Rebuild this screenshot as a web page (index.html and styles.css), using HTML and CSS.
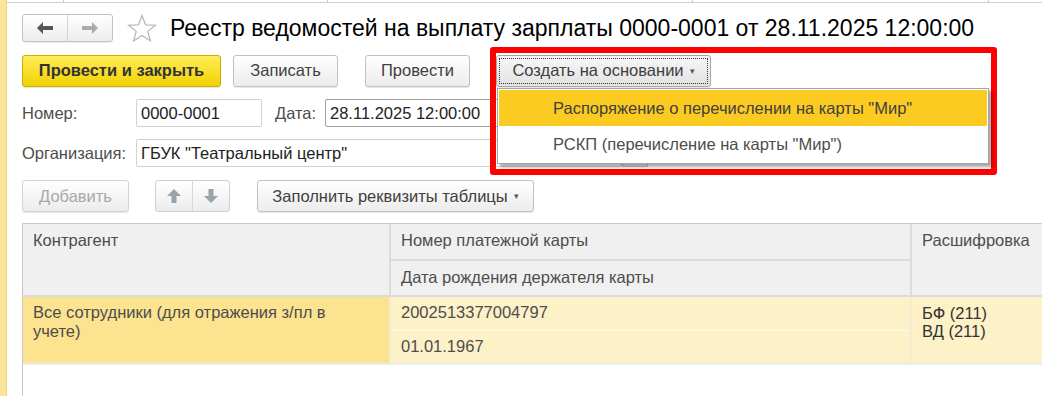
FILE: index.html
```html
<!DOCTYPE html>
<html lang="ru">
<head>
  <meta charset="UTF-8">
  <title>Реестр ведомостей на выплату зарплаты</title>
  <link rel="stylesheet" href="styles.css">
</head>
<body>

<div class="page">
  <div class="side-strip"></div>
  <div class="main">
    <div class="tabs-line"><span class="tick t1"></span><span class="tick t2"></span><span class="tick t3"></span><span class="tick t4"></span></div>

    <div class="title-row">
      <div class="nav-group">
        <div class="nav-btn">
          <svg width="16" height="12" viewBox="0 0 16 12"><path d="M0 6 L6 0 L6 4 L16 4 L16 8 L6 8 L6 12 Z" fill="#555"/></svg>
        </div>
        <div class="nav-btn">
          <svg width="16" height="12" viewBox="0 0 16 12"><path d="M16 6 L10 0 L10 4 L0 4 L0 8 L10 8 L10 12 Z" fill="#aaa"/></svg>
        </div>
      </div>
      <div class="star">
        <svg width="30" height="29" viewBox="0 0 30 29"><path d="M15 1.5 L18.6 10.8 L28.5 11.2 L20.8 17.4 L23.4 27 L15 21.5 L6.6 27 L9.2 17.4 L1.5 11.2 L11.4 10.8 Z" fill="none" stroke="#b4b4b4" stroke-width="1.2"/></svg>
      </div>
      <h1 class="title">Реестр ведомостей на выплату зарплаты 0000-0001 от 28.11.2025 12:00:00</h1>
    </div>

    <div class="command-row">
      <div class="btn btn-primary">Провести и закрыть</div>
      <div class="btn btn-write">Записать</div>
      <div class="btn btn-post">Провести</div>
      <div class="btn btn-create"><span class="focus">Создать на основании <span class="caret">&#9662;</span></span></div>
    </div>

    <div class="field-row">
      <span class="label label-num">Номер:</span>
      <div class="input input-num">0000-0001</div>
      <span class="label label-date">Дата:</span>
      <div class="input input-date">28.11.2025 12:00:00</div>
    </div>

    <div class="field-row">
      <span class="label label-org">Организация:</span>
      <div class="input input-org">ГБУК "Театральный центр"</div>
      <div class="input-btn"></div>
    </div>

    <div class="table-bar">
      <div class="btn btn-add">Добавить</div>
      <div class="move-group">
        <div class="move-btn">
          <svg width="14" height="14" viewBox="0 0 14 14"><path d="M7 0 L14 7 L9.5 7 L9.5 14 L4.5 14 L4.5 7 L0 7 Z" fill="#9aa4a8"/></svg>
        </div>
        <div class="move-btn">
          <svg width="14" height="14" viewBox="0 0 14 14"><path d="M7 14 L14 7 L9.5 7 L9.5 0 L4.5 0 L4.5 7 L0 7 Z" fill="#9aa4a8"/></svg>
        </div>
      </div>
      <div class="btn btn-fill">Заполнить реквизиты таблицы <span class="caret">&#9662;</span></div>
    </div>

    <div class="grid">
      <div class="grid-head">
        <div class="cell col-1 head-tall">Контрагент</div>
        <div class="col-2">
          <div class="cell head-sub">Номер платежной карты</div>
          <div class="cell head-sub">Дата рождения держателя карты</div>
        </div>
        <div class="cell col-3 head-tall">Расшифровка</div>
      </div>
      <div class="grid-row">
        <div class="cell col-1 row-current">Все сотрудники (для отражения з/пл в учете)</div>
        <div class="col-2">
          <div class="cell row-sub">2002513377004797</div>
          <div class="cell row-sub">01.01.1967</div>
        </div>
        <div class="cell col-3 row-plain">БФ (211)<br>ВД (211)</div>
      </div>
    </div>
  </div>
</div>

<!-- выделение и открытое подменю -->
<div class="highlight"></div>
<div class="popup">
  <div class="popup-item active">Распоряжение о перечислении на карты "Мир"</div>
  <div class="popup-item">РСКП (перечисление на карты "Мир")</div>
</div>

</body>
</html>
```

FILE: styles.css
```css
body {
  margin: 0;
  font-family: "Liberation Sans", Arial, sans-serif;
  font-size: 16.5px;
  color: #4d4d4d;
  background: #fff;
  overflow: hidden;
}
.page {
  display: flex;
  height: 396px;
}
.side-strip {
  width: 6px;
  background: #f9e59c;
  border-right: 1px solid #e8d27a;
  flex-shrink: 0;
}
.main {
  flex: 1;
  padding-left: 15px;
  min-width: 0;
  display: flex;
  flex-direction: column;
}
.tabs-line {
  height: 2px;
  border-bottom: 1px solid #cfcfcf;
  margin-left: -15px;
  position: relative;
}
.tick {
  position: absolute;
  top: 0;
  width: 1px;
  height: 2px;
  background: #cfcfcf;
}
.t1 { left: 56px; }
.t2 { left: 320px; }
.t3 { left: 685px; }
.t4 { left: 981px; }

/* заголовок */
.title-row {
  display: flex;
  align-items: center;
  margin-top: 11px;
  height: 28px;
}
.nav-group {
  display: flex;
  width: 91px;
  height: 28px;
  box-sizing: border-box;
  border: 1px solid #c4c4c4;
  border-radius: 3px;
  background: linear-gradient(#ffffff, #ececec);
  box-shadow: 0 1px 1px rgba(0, 0, 0, 0.08);
}
.nav-btn {
  flex: 1;
  display: flex;
  align-items: center;
  justify-content: center;
}
.nav-btn + .nav-btn {
  border-left: 1px solid #d4d4d4;
}
.star {
  margin-left: 14px;
  width: 30px;
  height: 29px;
}
.title {
  margin: 0 0 0 13px;
  font-size: 23px;
  font-weight: normal;
  color: #000;
  white-space: nowrap;
}

/* кнопки */
.btn {
  box-sizing: border-box;
  height: 32px;
  display: flex;
  align-items: center;
  justify-content: center;
  border: 1px solid #c2c2c2;
  border-radius: 3px;
  background: linear-gradient(#ffffff, #ececec);
  box-shadow: 0 1px 1px rgba(0, 0, 0, 0.1);
  color: #404040;
  white-space: nowrap;
}
.command-row {
  display: flex;
  margin-top: 12px;
  height: 33px;
  align-items: center;
  flex-shrink: 0;
}
.btn-primary {
  width: 199px;
  background: linear-gradient(#ffec5a, #f2d200);
  border-color: #c9ae00;
  font-weight: bold;
  color: #333;
}
.btn-write {
  width: 105px;
  margin-left: 12px;
}
.btn-post {
  width: 105px;
  margin-left: 27px;
}
.btn-create {
  width: 215px;
  height: 32px;
  margin-left: 26px;
  padding: 2px;
  background: linear-gradient(#f7f7f7, #e2e2e2);
  border-color: #a8a8a8;
}
.btn-create .focus {
  flex: 1;
  align-self: stretch;
  display: flex;
  align-items: center;
  justify-content: center;
  border: 1px dotted #333;
}
.caret {
  font-size: 9px;
  margin-left: 6px;
  color: #555;
}

/* поля */
.field-row {
  display: flex;
  align-items: center;
  height: 28px;
  margin-top: 12px;
  flex-shrink: 0;
}
.field-row + .field-row {
  margin-top: 12px;
}
.label {
  color: #4d4d4d;
}
.label-num { width: 114px; }
.label-org { width: 114px; }
.label-date { margin-left: 13px; width: 50px; }
.input {
  box-sizing: border-box;
  height: 28px;
  border: 1px solid #d2d2d2;
  border-radius: 2px;
  padding: 0 4px;
  display: flex;
  align-items: center;
  color: #222;
  white-space: nowrap;
}
.input-num { width: 126px; }
.input-date { width: 180px; border-color: #a0a0a0; }
.input-org { width: 486px; }
.input-btn {
  width: 26px;
  height: 28px;
  box-sizing: border-box;
  border: 1px solid #c8c8c8;
  background: linear-gradient(#fff, #ececec);
}

/* панель таблицы */
.table-bar {
  display: flex;
  align-items: center;
  margin-top: 13px;
  height: 32px;
  flex-shrink: 0;
}
.btn-add {
  width: 107px;
  color: #a8a8a8;
  border-color: #d4d4d4;
}
.move-group {
  display: flex;
  width: 75px;
  height: 32px;
  margin-left: 26px;
  box-sizing: border-box;
  border: 1px solid #d0d0d0;
  border-radius: 3px;
  background: linear-gradient(#ffffff, #ececec);
}
.move-btn {
  flex: 1;
  display: flex;
  align-items: center;
  justify-content: center;
}
.move-btn + .move-btn {
  border-left: 1px solid #d8d8d8;
}
.btn-fill {
  width: 277px;
  margin-left: 27px;
}

/* таблица */
.grid {
  margin-top: 11px;
  border-top: 1px solid #c8c8c8;
  border-left: 1px solid #c8c8c8;
  flex: 1;
  min-height: 0;
}
.grid-head, .grid-row {
  display: flex;
}
.grid-head {
  background: #f0f0f0;
  border-bottom: 2px solid #dcdcdc;
}
.grid-row {
  border-bottom: 2px solid #ececec;
}
.cell {
  box-sizing: border-box;
  padding: 7px 10px 0 10px;
  color: #4d4d4d;
}
.col-1 {
  width: 368px;
  border-right: 2px solid #dcdcdc;
  flex-shrink: 0;
}
.col-2 {
  width: 519px;
  border-right: 2px solid #dcdcdc;
  flex-shrink: 0;
}
.col-3 {
  flex: 1;
  white-space: nowrap;
}
.head-tall {
  height: 71px;
}
.head-sub {
  height: 35px;
}
.head-sub + .head-sub {
  border-top: 2px solid #dcdcdc;
  height: 36px;
}
.row-current {
  background: #fbe38f;
  height: 66px;
  padding-top: 6px;
  padding-right: 30px;
  line-height: 19px;
}
.row-sub {
  background: #fdf1c7;
  height: 33px;
  padding-top: 6px;
}
.row-sub + .row-sub {
  border-top: 1px solid #fff9e3;
}
.row-plain {
  background: #fdf1c7;
  padding-top: 7px;
  line-height: 18px;
  color: #333;
}
.grid-row .col-1, .grid-row .col-2 {
  border-right-color: #f4ecd0;
}

/* выделение красной рамкой и подменю */
.highlight {
  position: absolute;
  left: 490px;
  top: 47px;
  width: 495px;
  height: 116px;
  border: 6px solid #ff0000;
  border-radius: 3px;
}
.popup {
  position: absolute;
  left: 497px;
  top: 88px;
  width: 488px;
  padding: 1px;
  background: #fff;
  border: 1px solid #a4a4a4;
  box-shadow: 3px 3px 3px rgba(0, 0, 0, 0.35);
}
.popup-item {
  height: 36px;
  padding-left: 54px;
  display: flex;
  align-items: center;
  color: #4d4d4d;
  white-space: nowrap;
}
.popup-item.active {
  background: #fbcb22;
  color: #404040;
}
```
